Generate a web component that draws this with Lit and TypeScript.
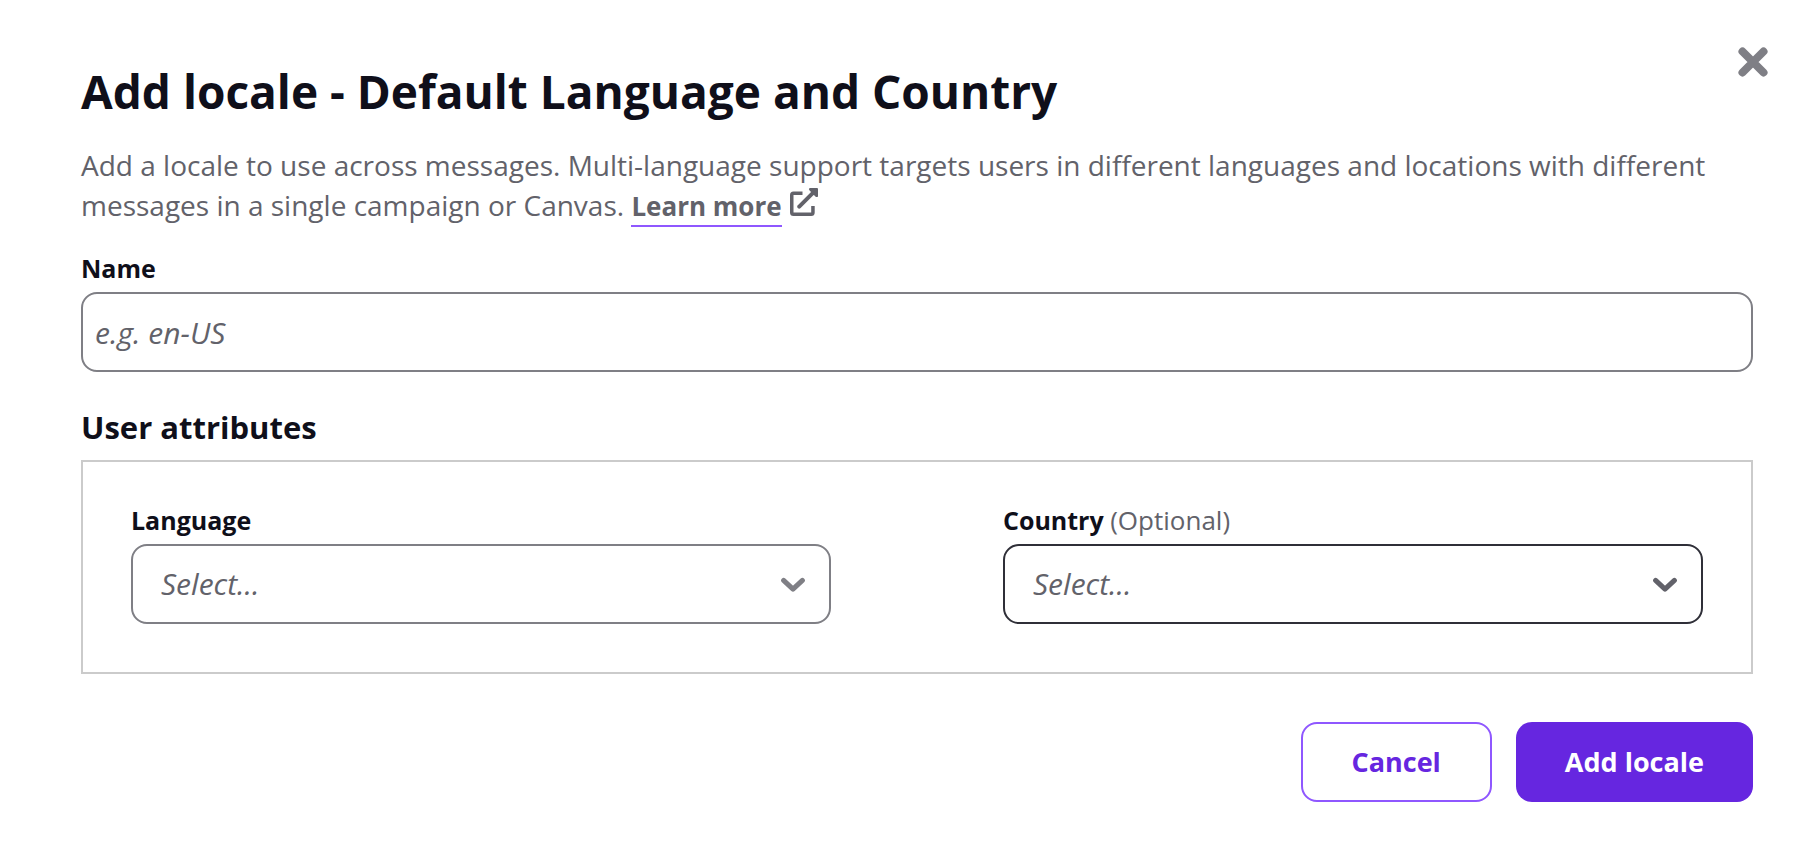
import { LitElement, html, css } from "lit";
import { customElement, property } from "lit/decorators.js";

const chevron = html`<svg class="chevron" viewBox="0 0 24 16" aria-hidden="true">
  <path d="M2.6 4.4 L12 13.2 L21.4 4.4" />
</svg>`;

@customElement("select-field")
export class SelectField extends LitElement {
  static styles = css`
    :host {
      display: flex;
      flex-direction: column;
      gap: 6px;
      min-width: 0;
    }
    .label {
      font-size: 25px;
      line-height: 36px;
      font-weight: 700;
      color: #0f0f1a;
    }
    .optional {
      font-size: 26px;
      font-weight: 400;
      color: #62626a;
    }
    .control {
      display: grid;
      align-items: center;
      color: #7f7f85;
    }
    .control.active {
      color: #62626a;
    }
    .select {
      grid-area: 1 / 1;
      appearance: none;
      box-sizing: border-box;
      width: 100%;
      height: 80px;
      margin: 0;
      padding: 0 64px 0 28px;
      border: 2px solid #7f7f85;
      border-radius: 16px;
      background: #fff;
      font: italic 400 30px/40px "Open Sans", sans-serif;
      color: #62626a;
      outline: none;
    }
    .control.active .select {
      border-color: #2f2f38;
    }
    .chevron {
      grid-area: 1 / 1;
      justify-self: end;
      width: 24px;
      height: 16px;
      margin-right: 26px;
      fill: none;
      stroke: currentColor;
      stroke-width: 5;
      stroke-linecap: round;
      stroke-linejoin: round;
      pointer-events: none;
    }
  `;

  @property() label = "";
  @property({ type: Boolean }) optional = false;
  @property({ type: Boolean }) active = false;

  render() {
    return html`
      <label class="label" for="select"
        >${this.label}${this.optional
          ? html` <span class="optional">(Optional)</span>`
          : ""}</label
      >
      <div class="control ${this.active ? "active" : ""}">
        <select class="select" id="select">
          <option>Select...</option>
        </select>
        ${chevron}
      </div>
    `;
  }
}

@customElement("app-root")
export class AppRoot extends LitElement {
  static styles = css`
    :host {
      display: block;
      min-height: 100vh;
      background: #fff;
      font-family: "Open Sans", sans-serif;
      color: #0f0f1a;
    }
    .dialog {
      display: flex;
      flex-direction: column;
      padding: 42px 57px 58px 81px;
    }
    .header {
      display: flex;
      align-items: flex-start;
      justify-content: space-between;
    }
    .title {
      margin: 23px 0 0;
      font-size: 46px;
      line-height: 52px;
      font-weight: 700;
    }
    .close {
      display: grid;
      place-items: center;
      width: 40px;
      height: 40px;
      margin: 0 -20px 0 0;
      padding: 0;
      border: 0;
      background: none;
      color: #7f7f85;
    }
    .close-icon {
      width: 30px;
      height: 30px;
      stroke: currentColor;
      stroke-width: 8;
      stroke-linecap: round;
    }
    .intro {
      margin: 28px 0 0;
      font-size: 28px;
      line-height: 40px;
      color: #62626a;
    }
    .link {
      color: inherit;
      font-size: 26px;
      font-weight: 700;
      line-height: 36px;
      text-decoration: none;
    }
    .link-text {
      padding-bottom: 1px;
      border-bottom: 2px solid #8f57ff;
    }
    .external {
      width: 28px;
      height: 28px;
      margin-left: 8px;
      vertical-align: baseline;
      fill: none;
      stroke: currentColor;
    }
    .name {
      display: flex;
      flex-direction: column;
      gap: 6px;
      margin-top: 25px;
    }
    .label {
      font-size: 25px;
      line-height: 36px;
      font-weight: 700;
    }
    .input {
      box-sizing: border-box;
      width: 100%;
      height: 80px;
      margin: 0;
      padding: 0 12px;
      border: 2px solid #7f7f85;
      border-radius: 16px;
      background: #fff;
      font: 400 30px/40px "Open Sans", sans-serif;
      color: #0f0f1a;
      outline: none;
    }
    .input::placeholder {
      color: #62626a;
      font-style: italic;
      opacity: 1;
    }
    .section-title {
      margin: 35px 0 13px;
      font-size: 31px;
      line-height: 40px;
      font-weight: 700;
    }
    .attributes {
      display: grid;
      grid-template-columns: 1fr 1fr;
      gap: 172px;
      padding: 40px 48px 48px;
      border: 2px solid #cbcbcb;
    }
    .actions {
      display: flex;
      justify-content: flex-end;
      gap: 24px;
      margin-top: 48px;
    }
    .button {
      height: 80px;
      padding: 0 49px;
      border: 2px solid #8f57ff;
      border-radius: 16px;
      background: #fff;
      font: 700 27px/40px "Open Sans", sans-serif;
      color: #6626e0;
    }
    .button.primary {
      border: 0;
      background: #6626e0;
      color: #fff;
    }
  `;

  render() {
    return html`
      <main class="dialog" role="dialog" aria-labelledby="title">
        <header class="header">
          <h1 class="title" id="title">Add locale - Default Language and Country</h1>
          <button class="close" type="button" aria-label="Close">
            <svg class="close-icon" viewBox="0 0 30 30" aria-hidden="true">
              <path d="M4.5 4.5 L25.5 25.5 M25.5 4.5 L4.5 25.5" />
            </svg>
          </button>
        </header>
        <p class="intro">
          Add a locale to use across messages. Multi-language support targets users in
          different languages and locations with different messages in a single campaign
          or Canvas.
          <a class="link" href="#"
            ><span class="link-text">Learn more</span
            ><svg class="external" viewBox="0 0 28 28" aria-hidden="true">
              <path d="M12.5 5.25 H3.5 Q1.75 5.25 1.75 7 V24.5 Q1.75 26.25 3.5 26.25 H21.2 Q22.95 26.25 22.95 24.5 V18" stroke-width="3.5" stroke-linecap="butt" stroke-linejoin="round" />
              <path d="M9.2 18.6 L23 4.8" stroke-width="4" stroke-linecap="round" />
              <path d="M19.6 0 H27 Q28 0 28 1 V8.4 Q26.6 9.6 25.4 8.4 L19.6 2.6 Q18.2 1.2 19.6 0 Z" fill="currentColor" stroke="none" />
            </svg></a
          >
        </p>
        <div class="name">
          <label class="label" for="name">Name</label>
          <input class="input" id="name" type="text" placeholder="e.g. en-US" />
        </div>
        <h2 class="section-title">User attributes</h2>
        <section class="attributes">
          <select-field label="Language"></select-field>
          <select-field label="Country" optional active></select-field>
        </section>
        <footer class="actions">
          <button class="button" type="button">Cancel</button>
          <button class="button primary" type="button">Add locale</button>
        </footer>
      </main>
    `;
  }
}
